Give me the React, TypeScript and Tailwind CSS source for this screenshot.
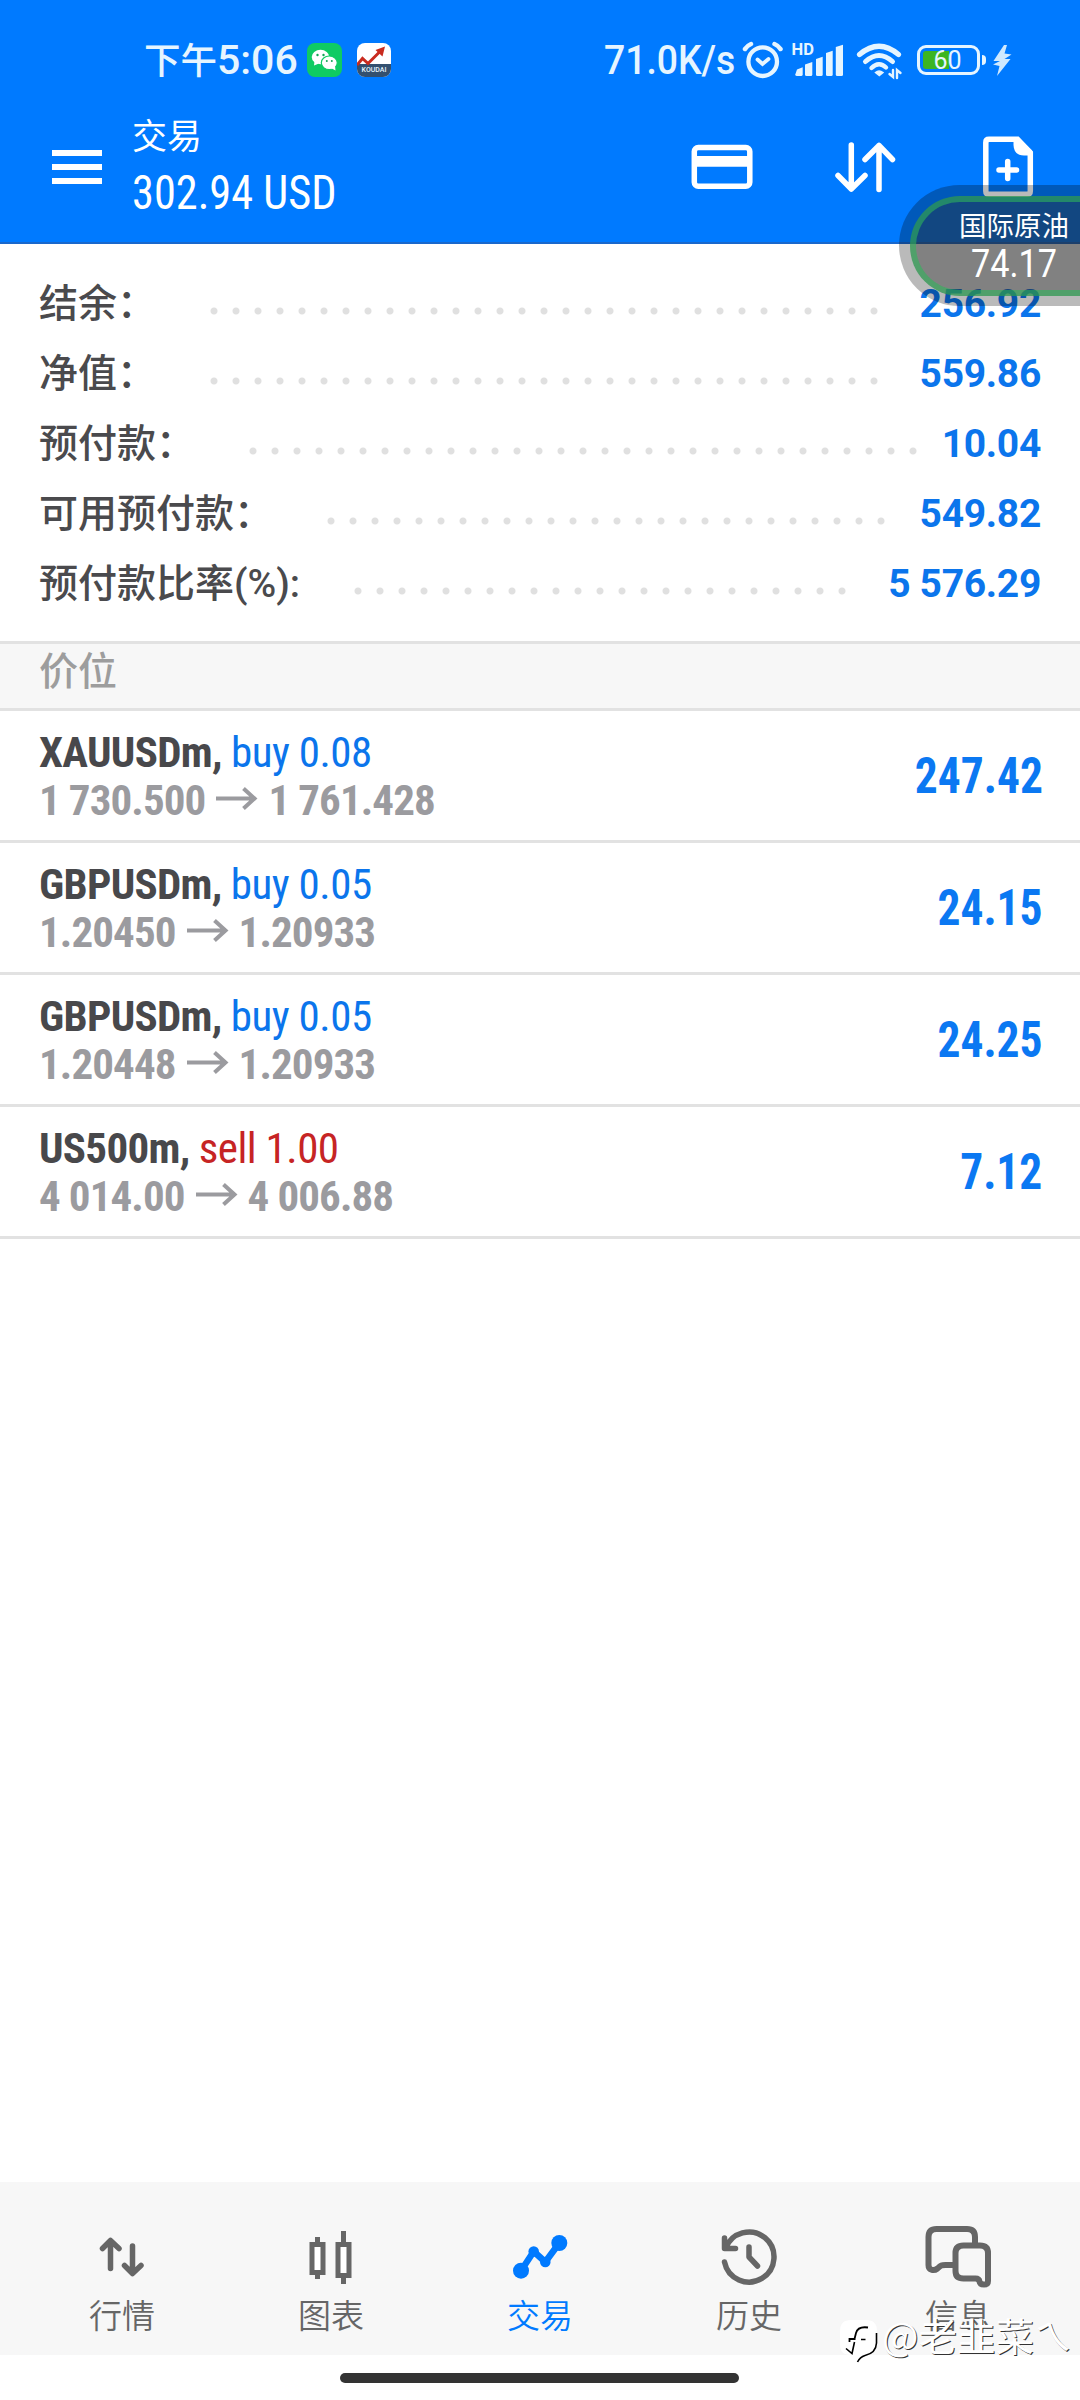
import { ReactNode } from "react";

type Summary = {
  label: string;
  value: string;
  dots: number;
};

type Position = {
  symbol: string;
  side: "buy" | "sell";
  volume: string;
  open: string;
  current: string;
  profit: string;
};

const summaries: Summary[] = [
  { label: "结余：", value: "256.92", dots: 31 },
  { label: "净值：", value: "559.86", dots: 31 },
  { label: "预付款：", value: "10.04", dots: 31 },
  { label: "可用预付款：", value: "549.82", dots: 26 },
  { label: "预付款比率(%):", value: "5 576.29", dots: 23 },
];

const positions: Position[] = [
  { symbol: "XAUUSDm", side: "buy", volume: "0.08", open: "1 730.500", current: "1 761.428", profit: "247.42" },
  { symbol: "GBPUSDm", side: "buy", volume: "0.05", open: "1.20450", current: "1.20933", profit: "24.15" },
  { symbol: "GBPUSDm", side: "buy", volume: "0.05", open: "1.20448", current: "1.20933", profit: "24.25" },
  { symbol: "US500m", side: "sell", volume: "1.00", open: "4 014.00", current: "4 006.88", profit: "7.12" },
];

const cn = (...classNames: string[]) => {
  return classNames.filter(Boolean).join(" ");
};

const StatusBar = () => {
  return (
    <div className="flex h-10 text-[#e6f5ff]">
      <div className="ml-36 w-[163px] whitespace-nowrap text-[41px] font-medium leading-[41px]">
        <span className="text-[36.5px]">下午</span>5:06
      </div>
      <svg width="35" height="34" viewBox="0 0 35 34" className="mt-[3px]">
        <rect width="35" height="34" rx="8" fill="#0fcb63" />
        <ellipse cx="13.5" cy="14" rx="8.8" ry="7.2" fill="#fff" />
        <path d="M7.5 18l-.5 4.5 5-2z" fill="#fff" />
        <ellipse cx="22.3" cy="19.8" rx="8" ry="6.8" fill="#fff" stroke="#0fcb63" strokeWidth="1.2" />
        <path d="M24 25l4.5 2.5-.5-4.5z" fill="#fff" />
        <g fill="#0fa555">
          <circle cx="10.5" cy="12" r="1.2" />
          <circle cx="16.5" cy="12" r="1.2" />
          <circle cx="19.8" cy="18" r="1" />
          <circle cx="24.8" cy="18" r="1" />
        </g>
      </svg>
      <div className="relative ml-[15px] mt-[3px] h-[34px] w-[34px] overflow-hidden rounded-lg bg-white">
        <div className="mt-[21px] h-[13px] bg-[#33506f] text-center text-[7px] font-medium leading-[13px]">
          KOUDAI
        </div>
        <svg width="34" height="34" viewBox="0 0 34 34" className="absolute left-0 top-0">
          <path d="M0 22L5.5 15.5L11 20.5L23.5 8" fill="none" stroke="#c92b1f" strokeWidth="3" />
          <path d="M18.5 7L28 3.5L25.5 13.5Z" fill="#c92b1f" />
        </svg>
      </div>
      <div className="ml-[213px] w-[137.5px] whitespace-nowrap text-[41px] font-medium leading-[41px]">
        <span className="inline-block origin-left scale-x-[0.91]">71.0K/s</span>
      </div>
      <svg width="41" height="40" viewBox="0 0 41 40" fill="none" stroke="currentColor" strokeLinecap="round">
        <circle cx="20.7" cy="21.7" r="14.3" strokeWidth="4.3" />
        <path d="M3 9C4.5 6.5 6.5 5 9 4M32.5 4C35 5 37 6.5 38.5 9" strokeWidth="4.5" />
        <path d="M15.5 19.5L20.5 24L26.5 19" strokeWidth="3.8" />
      </svg>
      <div className="relative ml-[9px] h-10 w-[52px]">
        <span className="absolute left-0 top-[3px] text-[16.5px] font-bold leading-[14px]">HD</span>
        <svg width="52" height="40" viewBox="0 0 52 40" fill="currentColor">
          <path d="M3.3 34.5L5 29.5L10.7 27.3V34.5Q10.7 36 9 36H5Q3.3 36 3.3 34.5Z" />
          <path d="M13 24.5L20.3 22V34.5Q20.3 36 18.8 36H14.5Q13 36 13 34.5Z" />
          <path d="M24 19L30.7 16.7V34.5Q30.7 36 29.2 36H25.5Q24 36 24 34.5Z" />
          <path d="M34 13L40.7 10.7V34.5Q40.7 36 39.2 36H35.5Q34 36 34 34.5Z" />
          <path d="M43.8 7L51 4.7V34.5Q51 36 49.5 36H45.3Q43.8 36 43.8 34.5Z" />
        </svg>
      </div>
      <svg width="48" height="40" viewBox="0 0 48 40" className="ml-[11px]" fill="none" stroke="currentColor" strokeLinecap="round">
        <path d="M4.5 14.5Q24 -2 43.5 14.5" strokeWidth="5.2" />
        <path d="M10.5 21.5Q24 9.5 37.5 21.5" strokeWidth="5" />
        <path d="M16.5 28Q24 20.5 31 27.5" strokeWidth="4.4" />
        <path d="M20.5 32.5Q24 29.5 28 32.5L24.3 35.5Z" fill="currentColor" strokeWidth="1.5" />
        <path d="M38 30V37L34.5 34M42 38V30L45.5 33" strokeWidth="2.4" />
      </svg>
      <div className="relative ml-[14px] mt-[5px] h-[30px] w-[63.5px] rounded-[9px] border-[3px] border-current">
        <div className="ml-[3.5px] mt-[3px] h-[18px] w-[26px] rounded-l-[3px] bg-[#3cb521]" />
        <span className="absolute left-[14px] top-0 text-[25px] leading-[25px]">60</span>
      </div>
      <div className="ml-[1.5px] mt-[15px] h-[10px] w-1 rounded-r-sm bg-current" />
      <svg width="20" height="40" viewBox="0 0 20 40" className="ml-1.5" fill="#cfe9ff">
        <path d="M12 5L1.5 21H8L1 24.5L7.5 26L5 36L18.5 19H12.5L19.5 14.5L12.5 13.5L15 5Z" />
      </svg>
    </div>
  );
};

const Header = () => {
  return (
    <header className="h-[244px] border-b-2 border-[#1a68cc] bg-[#007aff] pt-10">
      <StatusBar />
      <div className="flex items-start text-white">
        <div className="ml-[52px] mt-[70px] flex w-[50px] flex-col gap-2">
          <div className="h-1.5 bg-white" />
          <div className="h-1.5 bg-white" />
          <div className="h-1.5 bg-white" />
        </div>
        <div className="ml-[30px] mt-9 whitespace-nowrap">
          <div className="text-[35px] leading-[44px]">交易</div>
          <div className="mt-[3px] origin-left scale-x-[0.905] font-['Roboto_Condensed'] text-[49px] leading-[60px]">
            302.94 USD
          </div>
        </div>
        <svg width="64" height="74" viewBox="0 0 64 74" className="ml-auto mt-[50px]">
          <rect x="4.3" y="17.5" width="55.5" height="38.8" rx="4" fill="none" stroke="currentColor" strokeWidth="5.5" />
          <path d="M4 26H60V36.7H4Z" fill="currentColor" />
        </svg>
        <svg
          width="63"
          height="74"
          viewBox="0 0 63 74"
          className="ml-20 mt-[50px]"
          fill="none"
          stroke="currentColor"
          strokeWidth="5.5"
          strokeLinecap="round"
          strokeLinejoin="round"
        >
          <path d="M17.3 15V59M4 45.5L17.3 59L31 45.5" />
          <path d="M45 59.5V15.5M31 29.5L45 15.5L58.5 29.5" />
        </svg>
        <svg width="52" height="74" viewBox="0 0 52 74" className="ml-[85px] mr-[46px] mt-[50px]">
          <path
            d="M7 9.3H35.5L48.3 22.5V61Q48.3 64.3 45 64.3H7Q3.8 64.3 3.8 61V12.5Q3.8 9.3 7 9.3Z"
            fill="none"
            stroke="currentColor"
            strokeWidth="5.5"
          />
          <path d="M31.5 8V15Q32 25.5 42 25.5H50V20.5L37 8Z" fill="currentColor" />
          <path d="M25.7 31.5V48.5M17 40H34.5" stroke="currentColor" strokeWidth="5.5" strokeLinecap="round" />
        </svg>
      </div>
    </header>
  );
};

// floating quote bubble, docked to the right edge over header and list
const QuoteBubble = () => {
  return (
    <div className="absolute left-[899px] top-[185px] h-[121px] w-[181px] overflow-hidden rounded-l-full bg-black/27">
      <div className="absolute left-[11px] top-[10.5px] h-[100px] w-[200px] rounded-l-full border-[6px] border-[#2eb45a]/60 bg-[#2d2d2d]/40" />
      <div className="relative pl-[60px] pt-[25px] text-white">
        <div className="whitespace-nowrap text-[27.5px] leading-[34px]">国际原油</div>
        <div className="ml-3 origin-left scale-x-[0.9] text-[38px] leading-[41px]">74.17</div>
      </div>
    </div>
  );
};

const SummaryRow = ({ label, value, dots }: Summary) => {
  return (
    <div className="flex h-[70px] items-center text-[39px] font-medium leading-[70px]">
      <span className="whitespace-nowrap text-[#4a4a4d]">{label}</span>
      <span
        className="ml-[46.5px] mt-[13px] h-2 bg-[radial-gradient(circle,#e0e0e0_3px,transparent_4px)] bg-[length:22px_8px]"
        style={{ width: dots * 22 }}
      />
      <span className="ml-auto font-bold tracking-[-0.3px] text-[#0b75ec]">{value}</span>
    </div>
  );
};

const PositionRow = ({ symbol, side, volume, open, current, profit }: Position) => {
  return (
    <div className="flex h-[132px] justify-between border-b-[3px] border-[#e2e2e2] px-[39px] font-['Roboto_Condensed'] font-bold">
      <div className="pt-[17px] text-[43px] leading-[48px]">
        <div className="tracking-[-0.7px] text-[#48484b]">
          {symbol},{" "}
          <span
            className={cn("font-normal tracking-[-0.5px]", side === "buy" ? "text-[#0b75ec]" : "text-[#c62424]")}
          >
            {side} {volume}
          </span>
        </div>
        <div className="flex tracking-[-0.9px] text-[#9b9b9f]">
          <span>{open}</span>
          <svg
            width="42"
            height="48"
            viewBox="0 0 42 48"
            className="ml-[11px] mr-[10px]"
            fill="none"
            stroke="currentColor"
            strokeWidth="4"
          >
            <path d="M0 22.5H39M27.5 12.5L38.5 22.5L27.5 32.5" />
          </svg>
          <span>{current}</span>
        </div>
      </div>
      <div className="-mr-[1.5px] origin-right scale-x-[0.91] pt-0.5 text-[50px] leading-[127px] text-[#0b78f2]">
        {profit}
      </div>
    </div>
  );
};

const Tab = ({ label, active, children }: { label: string; active?: boolean; children: ReactNode }) => {
  return (
    <div className={cn("flex w-[209px] flex-col items-center pt-10", active ? "text-[#007aff]" : "text-[#666666]")}>
      <svg width="72" height="72" viewBox="0 0 72 72" fill="none" stroke="currentColor" strokeLinecap="round" strokeLinejoin="round">
        {children}
      </svg>
      <span className="mt-[3px] text-[33px] font-[350] leading-[40px]">{label}</span>
    </div>
  );
};

const TabBar = () => {
  return (
    <nav className="flex h-[173px] bg-[#f7f7f7] px-[17.5px]">
      <Tab label="行情">
        <path d="M24.5 46.5V19M16.5 26.5L24.5 18.5L33 26.5M46.5 24V51M38.5 43.5L46.5 51.5L55 43.5" strokeWidth="5.5" />
      </Tab>
      <Tab label="图表">
        <g strokeWidth="5" strokeLinecap="butt" strokeLinejoin="miter">
          <path d="M22.5 15V20M22.5 52V57M48.5 9V20M48.5 54V62" />
          <path d="M17 22.5H28V50.5H17ZM43 22.5H54V53.5H43Z" fill="#fff" />
        </g>
      </Tab>
      <Tab label="交易" active>
        <path d="M17 48.7L29.7 29.5L41.3 40L55.3 21" strokeWidth="6.5" />
        <g fill="currentColor" stroke="none">
          <circle cx="17" cy="48.7" r="8" />
          <circle cx="29.7" cy="29.5" r="5.3" />
          <circle cx="41.3" cy="40" r="5.3" />
          <circle cx="55.3" cy="21" r="8" />
        </g>
      </Tab>
      <Tab label="历史">
        <path d="M12.5 26.5A25 25 0 1 1 11.5 40M11.5 16V26.5H22.5M36 25V35L44.5 44" strokeWidth="5.5" />
      </Tab>
      <Tab label="信息">
        <path
          d="M53 21V15Q53 7 45 7H14.5Q6.5 7 6.5 15V43C6.500 48 11.5 49.5 15.5 46.5C19 43 19.5 43 23.5 43H32M41.5 23.5H58Q66 23.5 66 31V59Q66 62.5 62 62.5Q58 62.5 57.5 59.5Q57 56.5 53.5 56.5H41.5Q33.5 56.5 33.5 49V31Q33.5 23.5 41.5 23.5Z"
          strokeWidth="6"
        />
      </Tab>
    </nav>
  );
};

const Watermark = () => {
  return (
    <div className="absolute left-[839px] top-[2316px] flex text-white">
      <svg width="43" height="50" viewBox="0 0 43 50" fill="none">
        <path d="M12 4H27Q38 4 38 15V26Q38 37 26 40L18 46L19 40L6 38Q1 36 1 28V15Q1 4 12 4Z" fill="#fff" />
        <path d="M37.5 17V27Q37 37 26 39.5Q21 41 18.5 46" stroke="#000" strokeWidth="1.6" />
        <path d="M29 11.5Q19 10 17 17L15.5 23M16.5 23H10.5V26" stroke="#000" strokeWidth="1.8" />
        <path d="M15.5 26L13 37.5L7 32.5M22 23.5H26.5" stroke="#000" strokeWidth="1.6" />
      </svg>
      <span className="-mt-px whitespace-nowrap font-['Noto_Sans_CJK_SC'] text-[38.5px] leading-[38px] [text-shadow:1px_1px_0_#333]">
        @老韭菜ㄟ
      </span>
    </div>
  );
};

const Page = () => {
  return (
    <div className="relative flex h-[2400px] w-[1080px] flex-col overflow-hidden bg-white font-[Roboto,'Noto_Sans_CJK_SC',sans-serif]">
      <Header />
      <section className="px-[39px] pb-[22px] pt-[25px]">
        {summaries.map((item) => (
          <SummaryRow key={item.label} {...item} />
        ))}
      </section>
      <div className="h-[70px] border-y-[3px] border-[#e2e2e2] bg-[#f7f7f7] px-[39px] text-[39px] font-medium leading-[57px] text-[#9d9d9d]">
        价位
      </div>
      <main className="flex-1">
        {positions.map((item, idx) => (
          <PositionRow key={idx} {...item} />
        ))}
      </main>
      <TabBar />
      <div className="h-[45px] pt-[18px]">
        <div className="ml-[340px] h-[10px] w-[399px] rounded-full bg-[#333333]" />
      </div>
      <QuoteBubble />
      <Watermark />
    </div>
  );
};

export default Page;
